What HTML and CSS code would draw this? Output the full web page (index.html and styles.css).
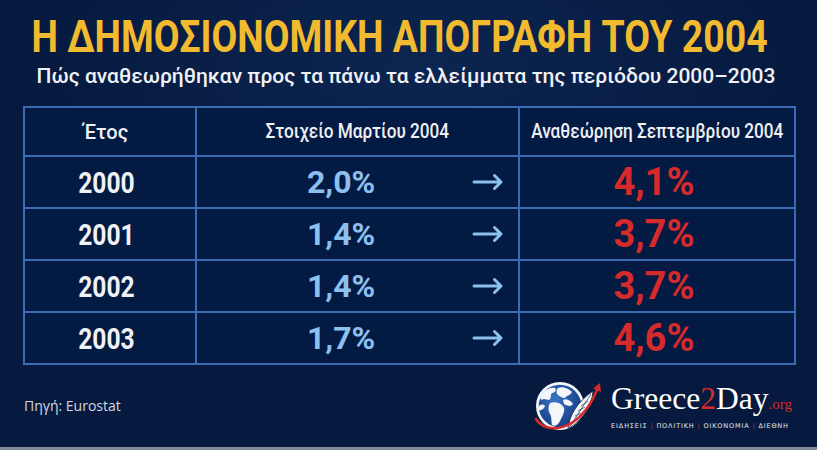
FILE: index.html
```html
<!DOCTYPE html>
<html lang="el">
<head>
<meta charset="utf-8">
<link rel="stylesheet" href="styles.css">
</head>
<body>
<div class="page">
  <h1 class="title"><span class="cond">Η ΔΗΜΟΣΙΟΝΟΜΙΚΗ ΑΠΟΓΡΑΦΗ ΤΟΥ 2004</span></h1>
  <p class="subtitle">Πώς αναθεωρήθηκαν προς τα πάνω τα ελλείμματα της περιόδου 2000–2003</p>
  <div class="table">
    <div class="cell head first">Έτος</div>
    <div class="cell head"><span class="cond">Στοιχείο Μαρτίου 2004</span></div>
    <div class="cell head"><span class="cond">Αναθεώρηση Σεπτεμβρίου 2004</span></div>

    <div class="cell year"><span class="cond">2000</span></div>
    <div class="cell mid"><span class="old">2,0%</span><svg class="arrow" width="32" height="18" viewBox="0 0 32 18"><path d="M2 9 H29 M22.5 2.5 L29 9 L22.5 15.5"/></svg></div>
    <div class="cell new">4,1%</div>

    <div class="cell year"><span class="cond">2001</span></div>
    <div class="cell mid"><span class="old">1,4%</span><svg class="arrow" width="32" height="18" viewBox="0 0 32 18"><path d="M2 9 H29 M22.5 2.5 L29 9 L22.5 15.5"/></svg></div>
    <div class="cell new">3,7%</div>

    <div class="cell year"><span class="cond">2002</span></div>
    <div class="cell mid"><span class="old">1,4%</span><svg class="arrow" width="32" height="18" viewBox="0 0 32 18"><path d="M2 9 H29 M22.5 2.5 L29 9 L22.5 15.5"/></svg></div>
    <div class="cell new">3,7%</div>

    <div class="cell year"><span class="cond">2003</span></div>
    <div class="cell mid"><span class="old">1,7%</span><svg class="arrow" width="32" height="18" viewBox="0 0 32 18"><path d="M2 9 H29 M22.5 2.5 L29 9 L22.5 15.5"/></svg></div>
    <div class="cell new">4,6%</div>
  </div>
  <div class="footer">
    <div class="source">Πηγή: Eurostat</div>
    <div class="logo">
      <svg class="globe" width="74" height="54" viewBox="0 0 74 54">
        <defs>
          <radialGradient id="sea" cx="0.4" cy="0.35" r="0.7">
            <stop offset="0" stop-color="#3a74c4"/>
            <stop offset="1" stop-color="#123a80"/>
          </radialGradient>
        </defs>
        <circle cx="29" cy="26" r="24" fill="#f4f6fa"/>
        <circle cx="29" cy="26" r="21.3" fill="url(#sea)"/>
        <path d="M10 16 C13 10 19 7 24 8 C26 10 24 13 21 13 C19 15 21 18 18 20 C15 20 13 18 11 20 C9 19 9 18 10 16 Z" fill="#f4f6fa"/>
        <path d="M8 26 C10 24 13 24 14 26 C13 29 10 31 8 30 Z" fill="#f4f6fa"/>
        <path d="M19 23 C24 21 31 23 33 28 C34 32 31 37 29 41 C27 45 24 47 21 45 C20 41 21 37 19 34 C17 31 17 26 19 23 Z" fill="#f4f6fa"/>
        <path d="M27 8 C32 6 38 9 41 12 C39 16 36 15 34 18 C31 18 28 16 26 14 C25 11 26 9 27 8 Z" fill="#f4f6fa"/>
        <path d="M32 20 C36 18 40 21 42 24 C40 27 36 26 33 24 Z" fill="#f4f6fa"/>
        <path d="M37 49 C38 36 46 22 62 11 C61 25 53 38 40 47 Z" fill="#f4f6fa" stroke="#22314f" stroke-width="0.9"/>
        <path d="M38 48 L60 14 M44 36 L50 33 M47 31 L54 27 M50 26 L57 21 M42 41 L47 39" stroke="#22314f" stroke-width="0.7" fill="none"/>
        <path d="M5 39 C15 55 48 53 66 10" stroke="#d42a2a" stroke-width="2.6" fill="none" stroke-linecap="round"/>
        <path d="M69 3 L70 12 L62 8.5 Z" fill="#d42a2a"/>
      </svg>
      <div class="brand">
        <div class="name">Greece<span class="two">2</span>Day<span class="org">.org</span></div>
        <div class="tag">ΕΙΔΗΣΕΙΣ <i>|</i> ΠΟΛΙΤΙΚΗ <i>|</i> ΟΙΚΟΝΟΜΙΑ <i>|</i> ΔΙΕΘΝΗ</div>
      </div>
    </div>
  </div>
</div>
</body>
</html>
```
FILE: styles.css
```css
html, body {
  margin: 0;
  padding: 0;
}
body {
  background: #051a3f;
  font-family: Roboto, "Noto Sans", sans-serif;
}
.page {
  width: 817px;
  height: 450px;
  box-sizing: border-box;
  border-bottom: 3px solid #7f899b;
  background: radial-gradient(ellipse 520px 240px at 420px 70px, #0c2550 0%, #061a3f 75%), #051a3f;
  overflow: hidden;
  display: flex;
  flex-direction: column;
}
.cond {
  display: inline-block;
  white-space: nowrap;
}
.title {
  margin: 14px 0 0;
  padding-right: 18px;
  display: flex;
  justify-content: center;
  color: #f2ba2f;
  font-size: 44px;
  line-height: 46px;
  font-weight: 700;
}
.title .cond {
  transform: scaleX(0.851);
}
.subtitle {
  margin: 3px 0 0;
  padding-right: 5px;
  text-align: center;
  color: #f0f1f4;
  font-size: 21px;
  line-height: 26px;
  font-weight: 500;
  white-space: nowrap;
}
.table {
  margin: 17px 0 0 23px;
  width: 773px;
  display: grid;
  grid-template-columns: 172px 323px 276px;
  grid-template-rows: 49px repeat(4, 52px);
  border-top: 2px solid #3b6bb2;
  border-left: 2px solid #3b6bb2;
  box-sizing: border-box;
  background: #031a43;
}
.cell {
  border-right: 2px solid #3b6bb2;
  border-bottom: 2px solid #3b6bb2;
  display: flex;
  align-items: center;
  justify-content: center;
  color: #ffffff;
}
.head {
  font-size: 19.5px;
  font-weight: 500;
  color: #eef0f5;
  white-space: nowrap;
}
.head .cond {
  transform: scaleX(0.88);
}
.head.first {
  padding-right: 8px;
  font-size: 20px;
}
.year {
  padding-right: 8px;
  font-size: 30px;
  font-weight: 700;
  color: #f0f1f4;
}
.year .cond {
  transform: scaleX(0.82);
}
.mid {
  justify-content: flex-start;
  padding-left: 110px;
}
.old {
  width: 165px;
  flex: none;
  font-size: 32px;
  font-weight: 700;
  color: #8cc0ee;
}
.arrow {
  display: block;
  flex: none;
}
.arrow path {
  fill: none;
  stroke: #8cc0ee;
  stroke-width: 3;
  stroke-linecap: round;
  stroke-linejoin: round;
}
.new {
  padding-right: 6px;
  font-size: 38px;
  font-weight: 700;
  color: #d62a2b;
}
.footer {
  margin-top: 15px;
  display: flex;
  align-items: flex-start;
  padding: 0 25px 0 24px;
}
.source {
  margin-top: 16px;
  color: #d3d7e0;
  font-family: "Open Sans", "Noto Sans", sans-serif;
  font-size: 14px;
  line-height: 19px;
}
.logo {
  margin-left: auto;
  display: flex;
  align-items: flex-start;
}
.globe {
  display: block;
}
.brand {
  margin-left: 6px;
  margin-top: 3px;
  display: flex;
  flex-direction: column;
}
.name {
  font-family: "Liberation Serif", serif;
  font-size: 31.5px;
  line-height: 32px;
  color: #ffffff;
  white-space: nowrap;
}
.two {
  color: #d42a2a;
}
.org {
  color: #d42a2a;
  font-size: 15px;
}
.tag {
  margin-top: 2px;
  font-family: "DejaVu Sans", sans-serif;
  font-size: 6.5px;
  line-height: 8px;
  letter-spacing: 0.85px;
  color: #e8eaf0;
  white-space: nowrap;
}
.tag i {
  font-style: normal;
  color: #d42a2a;
}
```
